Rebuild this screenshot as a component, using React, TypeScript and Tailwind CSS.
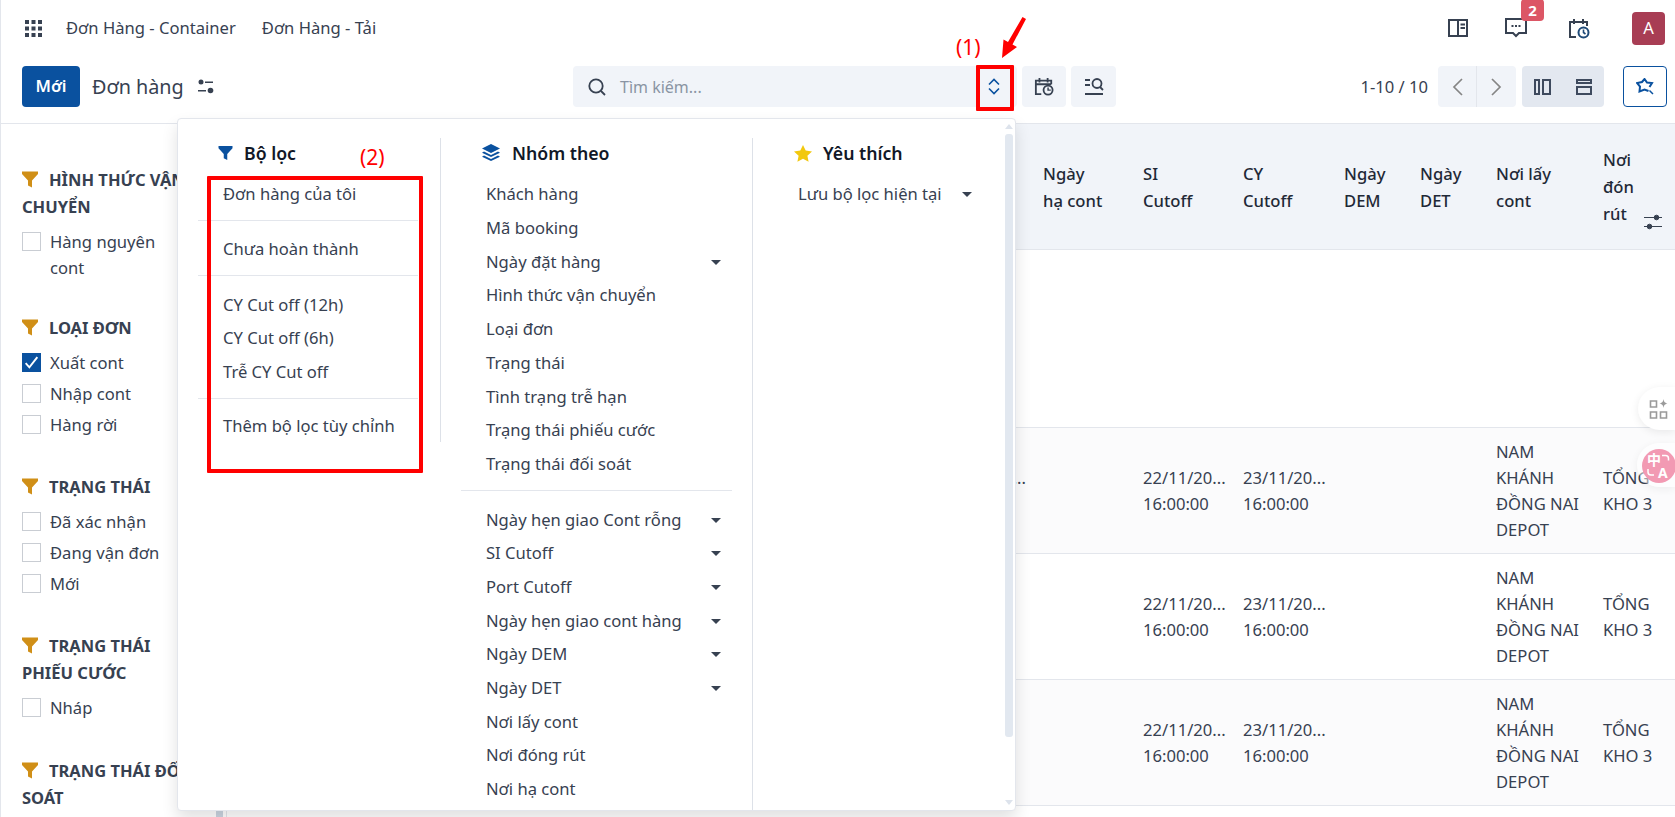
const font = "font-['Noto_Sans',sans-serif]";

function Funnel({ className }: { className: string }) {
  return (
    <svg viewBox="0 0 16 16" className={className} fill="currentColor">
      <path d="M0 0h16v2.5L10 9v7l-4-2V9L0 2.5z" />
    </svg>
  );
}

function Check({ checked, label }: { checked?: boolean; label: string }) {
  return (
    <div className="flex items-start gap-[9px] text-[#374151]">
      <span
        className={`mt-[3px] flex h-[19px] w-[19px] shrink-0 items-center justify-center border ${
          checked ? "border-[#0a519f] bg-[#0a519f]" : "border-[#c9cdd3] bg-white"
        }`}
      >
        {checked && (
          <svg viewBox="0 0 16 16" className="h-[17px] w-[17px]" fill="none" stroke="white" strokeWidth="1.8">
            <path d="M2.5 8.5l3.5 4L13.5 3" />
          </svg>
        )}
      </span>
      <span className="w-[125px] leading-[25.5px]">{label}</span>
    </div>
  );
}

function FilterGroup({ title, items }: { title: string; items: { label: string; checked?: boolean }[] }) {
  return (
    <div className="mb-[35.7px] first:mb-[34px]">
      <div className="mb-[9px] text-[16.5px] leading-[27px] font-bold text-[#374151]">
        <Funnel className="mr-[11px] inline-block h-[17px] w-[16px] align-[-2px] text-[#d08f17]" />
        {title}
      </div>
      <div className="flex flex-col gap-[5.5px]">
        {items.map((i) => (
          <Check key={i.label} label={i.label} checked={i.checked} />
        ))}
      </div>
    </div>
  );
}

const sidebar = [
  { title: "HÌNH THỨC VẬN CHUYỂN", items: [{ label: "Hàng nguyên cont" }] },
  { title: "LOẠI ĐƠN", items: [{ label: "Xuất cont", checked: true }, { label: "Nhập cont" }, { label: "Hàng rời" }] },
  { title: "TRẠNG THÁI", items: [{ label: "Đã xác nhận" }, { label: "Đang vận đơn" }, { label: "Mới" }] },
  { title: "TRẠNG THÁI PHIẾU CƯỚC", items: [{ label: "Nháp" }] },
  { title: "TRẠNG THÁI ĐỐI SOÁT", items: [] },
];

const columns = "grid-cols-[816px_100px_100px_101px_76px_76px_107px_1fr]";

function Row({ alt, dots }: { alt?: boolean; dots?: boolean }) {
  return (
    <div className={`grid h-[126px] items-center border-b border-[#e3e6ec] leading-[26px] text-[#374151] ${columns} ${alt ? "bg-[#fbfbfc]" : "bg-white"}`}>
      <div className="pr-[17px] text-right">
        {dots && "..."}
        <br />
        &nbsp;
      </div>
      <div />
      <div className="whitespace-nowrap">
        22/11/20...
        <br />
        16:00:00
      </div>
      <div className="whitespace-nowrap">
        23/11/20...
        <br />
        16:00:00
      </div>
      <div />
      <div />
      <div className="whitespace-nowrap">
        NAM
        <br />
        KHÁNH
        <br />
        ĐỒNG NAI
        <br />
        DEPOT
      </div>
      <div className="whitespace-nowrap">
        TỔNG
        <br />
        KHO 3
      </div>
    </div>
  );
}

function Caret() {
  return <span className="h-0 w-0 border-x-[5px] border-t-[5px] border-x-transparent border-t-[#374151]" />;
}

function MenuItem({ label, caret }: { label: string; caret?: boolean }) {
  return (
    <div className="flex h-[33.7px] items-center justify-between whitespace-nowrap text-[#374151]">
      <span>{label}</span>
      {caret && <Caret />}
    </div>
  );
}

const groupA = [
  { label: "Khách hàng" },
  { label: "Mã booking" },
  { label: "Ngày đặt hàng", caret: true },
  { label: "Hình thức vận chuyển" },
  { label: "Loại đơn" },
  { label: "Trạng thái" },
  { label: "Tình trạng trễ hạn" },
  { label: "Trạng thái phiếu cước" },
  { label: "Trạng thái đối soát" },
];
const groupB = [
  { label: "Ngày hẹn giao Cont rỗng", caret: true },
  { label: "SI Cutoff", caret: true },
  { label: "Port Cutoff", caret: true },
  { label: "Ngày hẹn giao cont hàng", caret: true },
  { label: "Ngày DEM", caret: true },
  { label: "Ngày DET", caret: true },
  { label: "Nơi lấy cont" },
  { label: "Nơi đóng rút" },
  { label: "Nơi hạ cont" },
];

export default function App() {
  return (
    <div className={`relative h-[817px] w-[1675px] overflow-hidden border-l border-[#e3e6ec] bg-white text-[16.6px] ${font}`}>
      <nav className="flex h-[56px] items-center pr-[10px] pl-[24px] text-[#374151]">
        <svg viewBox="0 0 17 17" className="mr-[24px] h-[17px] w-[17px]" fill="#374151">
          {[0, 6.5, 13].flatMap((x) => [0, 6.5, 13].map((y) => <rect key={`${x}-${y}`} x={x} y={y} width="4" height="4" />))}
        </svg>
        <span>Đơn Hàng - Container</span>
        <span className="ml-[26px]">Đơn Hàng - Tải</span>
        <div className="ml-auto flex items-center">
          <svg viewBox="0 0 20 18" className="mr-[37px] h-[18px] w-[20px]" fill="none" stroke="#374151" strokeWidth="2">
            <path d="M1 1h18v16H1zM10 1v16M12.5 5.5H17M12.5 9H17" />
          </svg>
          <div className="relative mr-[41px]">
            <svg viewBox="0 0 22 20" className="h-[20px] w-[22px]" fill="none" stroke="#374151" strokeWidth="2">
              <path d="M1 1h20v14h-7l-3 3-3-3H1z" />
              <path d="M6.5 8h2M10 8h2M13.5 8h2" />
            </svg>
            <span className="absolute -top-[19px] left-[16px] flex h-[22px] w-[23px] items-center justify-center rounded-[4px] bg-[#dc5665] text-[15px] font-bold text-white">2</span>
          </div>
          <svg viewBox="0 0 22 21" className="mr-[42px] h-[21px] w-[22px]" fill="none" stroke="#374151" strokeWidth="2">
            <path d="M19 8V4H2v15h6M6 1v5M15 1v5" />
            <circle cx="15.5" cy="14.5" r="5" stroke="#1f4a78" />
            <path d="M15.5 11.5v3l2 1.5" stroke="#1f4a78" strokeWidth="1.6" />
          </svg>
          <span className="flex h-[33px] w-[33px] items-center justify-center rounded-[4px] bg-[#a83d54] text-white">A</span>
        </div>
      </nav>

      <div className="flex h-[68px] items-start border-b border-[#e3e6ec] pt-[10px] pr-[8px] pl-[21px]">
        <div className="flex w-[551px] shrink-0 items-center">
          <button className="h-[41px] w-[58px] rounded-[4px] bg-[#0a519f] font-semibold text-white">Mới</button>
          <span className="ml-[12px] text-[19.8px] leading-[41px] whitespace-nowrap text-[#374151]">Đơn hàng</span>
          <svg viewBox="0 0 16 15" className="ml-[14px] h-[15px] w-[16px]" fill="#374151">
            <circle cx="3" cy="3" r="2.5" />
            <circle cx="12.5" cy="11.5" r="2.8" />
            <path d="M7 2.5h8V4H7zM0 11h8v1.5H0z" />
          </svg>
        </div>
        <div className="flex h-[41px] w-[444px] shrink-0 items-center rounded-[4px] bg-[#f1f4f9] pl-[15px] text-[16px] text-[#8a94a3]">
          <svg viewBox="0 0 18 18" className="h-[18px] w-[18px]" fill="none" stroke="#374151" strokeWidth="1.8">
            <circle cx="8" cy="8" r="6.7" />
            <path d="M13 13l4 4" />
          </svg>
          <span className="ml-[14px]">Tìm kiếm...</span>
          <svg viewBox="0 0 12 17" className="mr-[17px] ml-auto h-[17px] w-[12px]" fill="none" stroke="#0a519f" strokeWidth="1.6">
            <path d="M1 6.5L6 1.5l5 5M1 10.5l5 5 5-5" />
          </svg>
        </div>
        <button className="ml-[5px] flex h-[41px] w-[44px] items-center justify-center rounded-[4px] bg-[#f1f4f9]">
          <svg viewBox="0 0 22 21" className="h-[19px] w-[20px]" fill="none" stroke="#374151" strokeWidth="2">
            <path d="M19 8V4H2v15h6M2 8h17M6 1v5M15 1v5" />
            <circle cx="15.5" cy="14.5" r="5" />
            <path d="M15.5 11.5v3h3" strokeWidth="1.6" />
          </svg>
        </button>
        <button className="ml-[5px] flex h-[41px] w-[45px] items-center justify-center rounded-[4px] bg-[#f1f4f9]">
          <svg viewBox="0 0 20 17" className="h-[17px] w-[20px]" fill="none" stroke="#374151" strokeWidth="1.8">
            <path d="M1 2h5M1 7h5" />
            <path d="M1 16h18" strokeWidth="2" />
            <circle cx="13" cy="5.5" r="4.5" />
            <path d="M16 9l3 3" />
          </svg>
        </button>
        <div className="ml-auto flex items-center">
          <span className="leading-[41px] whitespace-nowrap text-[#374151]">1-10 / 10</span>
          <div className="ml-[10px] flex h-[41px] w-[78px] rounded-[4px] bg-[#f1f4f9]">
            <div className="flex w-[39px] items-center justify-center border-r border-[#e3e6ec]">
              <svg viewBox="0 0 11 18" className="h-[18px] w-[11px]" fill="none" stroke="#858585" strokeWidth="1.7">
                <path d="M10 1L2 9l8 8" />
              </svg>
            </div>
            <div className="flex flex-1 items-center justify-center">
              <svg viewBox="0 0 11 18" className="h-[18px] w-[11px]" fill="none" stroke="#858585" strokeWidth="1.7">
                <path d="M1 1l8 8-8 8" />
              </svg>
            </div>
          </div>
          <div className="ml-[6px] flex h-[41px] w-[82px] items-center justify-center gap-[25px] rounded-[4px] bg-[#e3e8f0]">
            <svg viewBox="0 0 17 16" className="h-[16px] w-[17px]" fill="none" stroke="#3e4a5e" strokeWidth="2">
              <path d="M1 1h4v14H1zM9 1h7v14H9z" />
            </svg>
            <svg viewBox="0 0 16 16" className="h-[16px] w-[16px]" fill="none" stroke="#3e4a5e" strokeWidth="2">
              <path d="M1 1h14v3H1zM1 8h14v7H1z" />
            </svg>
          </div>
          <button className="ml-[19px] flex h-[41px] w-[44px] items-center justify-center rounded-[4px] border border-[#0a519f]">
            <svg viewBox="0 0 18 17" className="h-[17px] w-[18px]" fill="none" stroke="#0a519f" strokeWidth="2">
              <path d="M12.5 13L8.5 11.5 3.500 13.5 4 8.500 1 5l5-1L8.500 1l2.500 3.500 5 .5-2.500 4" />
              <path d="M13.500 12.500l3.500 3.500" strokeWidth="1.5" />
            </svg>
          </button>
        </div>
      </div>

      <div className="flex h-[693px]">
        <aside className="relative w-[226px] shrink-0 overflow-hidden border-r border-[#e3e6ec] pt-[42px] pl-[21px]">
          <div className="w-[172px]">
            {sidebar.map((g) => (
              <FilterGroup key={g.title} title={g.title} items={g.items} />
            ))}
          </div>
          <div className="absolute right-[3px] bottom-0 h-[6px] w-[7px] bg-[#cbd5e1]" />
        </aside>
        <main className="min-w-0 flex-1">
          <div className={`grid h-[126px] items-center border-b border-[#e3e6ec] bg-[#f1f4f9] leading-[27px] font-medium text-[#1f2937] ${columns}`}>
            <div />
            <div>Ngày<br />hạ cont</div>
            <div>SI<br />Cutoff</div>
            <div>CY<br />Cutoff</div>
            <div>Ngày<br />DEM</div>
            <div>Ngày<br />DET</div>
            <div>Nơi lấy<br />cont</div>
            <div className="relative">
              Nơi<br />đón<br />rút
              <svg viewBox="0 0 18 16" className="absolute top-[68px] left-[41px] h-4 w-[18px]" fill="#374151" stroke="#374151">
                <path d="M0 3.5h18M0 12.5h18" />
                <circle cx="12.5" cy="3.5" r="2.3" />
                <circle cx="5.5" cy="12.5" r="2.3" />
              </svg>
            </div>
          </div>
          <div className="h-[178px] border-b border-[#e3e6ec]" />
          <Row alt dots />
          <Row />
          <Row alt />
        </main>
      </div>

      {/* dropdown filter panel */}
      <div className="absolute top-[118px] left-[176px] flex h-[693px] w-[839px] rounded-[4px] border border-[#e3e6ec] bg-white pt-[19px] shadow-[0_8px_16px_rgba(0,0,0,0.12)]">
        <div className="h-[304px] w-[263px] shrink-0 self-start border-r border-[#dde1e8] pl-[20px]">
          <div className="mb-[10px] flex h-[30px] items-center pl-[20px] text-[17.7px] font-semibold text-[#111827]">
            <Funnel className="mr-[11px] h-[14px] w-[15px] text-[#0a519f]" />
            Bộ lọc
          </div>
          <div className="w-[220px]">
            <div className="pl-[25px]">
              <MenuItem label="Đơn hàng của tôi" />
            </div>
            <div className="mt-[8px] mb-[12px] border-t border-[#e3e6ec]" />
            <div className="pl-[25px]">
              <MenuItem label="Chưa hoàn thành" />
            </div>
            <div className="mt-[9px] mb-[12px] border-t border-[#e3e6ec]" />
            <div className="pl-[25px]">
              <MenuItem label="CY Cut off (12h)" />
              <MenuItem label="CY Cut off (6h)" />
              <MenuItem label="Trễ CY Cut off" />
            </div>
            <div className="mt-[9px] mb-[10px] border-t border-[#e3e6ec]" />
            <div className="pl-[25px]">
              <MenuItem label="Thêm bộ lọc tùy chỉnh" />
            </div>
          </div>
        </div>

        <div className="w-[312px] shrink-0 border-r border-[#dde1e8] pl-[20px]">
          <div className="mb-[10px] flex h-[30px] items-center pl-[21px] text-[17.7px] font-semibold text-[#111827]">
            <svg viewBox="0 0 18 18" className="mr-[12px] h-[18px] w-[18px]" fill="#0a519f">
              <path d="M9 0l9 4.5L9 9 0 4.5z" />
              <path d="M2 7.5l7 3.5 7-3.5 2 1.2L9 13 0 8.7z" />
              <path d="M2 11.5l7 3.5 7-3.5 2 1.2L9 17 0 12.7z" />
            </svg>
            Nhóm theo
          </div>
          <div className="w-[271px]">
            <div className="pr-[11px] pl-[25px]">
              {groupA.map((i) => (
                <MenuItem key={i.label} label={i.label} caret={i.caret} />
              ))}
            </div>
            <div className="mt-[9px] mb-[12px] border-t border-[#e3e6ec]" />
            <div className="pr-[11px] pl-[25px]">
              {groupB.map((i) => (
                <MenuItem key={i.label} label={i.label} caret={i.caret} />
              ))}
            </div>
          </div>
        </div>

        <div className="flex-1">
          <div className="mb-[10px] flex h-[30px] items-center pl-[41px] text-[17.7px] font-semibold text-[#111827]">
            <svg viewBox="0 0 18 17" className="mr-[11px] h-[17px] w-[18px]" fill="#f2c80f">
              <path d="M9 0l2.7 5.6 6.3.8-4.6 4.3 1.2 6.1L9 13.8l-5.6 3 1.2-6.1L0 6.4l6.3-.8z" />
            </svg>
            Yêu thích
          </div>
          <div className="pr-[43px] pl-[45px]">
            <MenuItem label="Lưu bộ lọc hiện tại" caret />
          </div>
        </div>

        {/* scrollbar */}
        <div className="absolute top-[5px] right-[2px] flex h-[681px] w-[8px] flex-col items-center">
          <span className="h-0 w-0 border-x-[4px] border-b-[5px] border-x-transparent border-b-[#dde3ec]" />
          <div className="mt-[5px] h-[603px] w-[8px] rounded-[3px] bg-[#e2e8f0]" />
          <span className="mt-auto h-0 w-0 border-x-[4px] border-t-[5px] border-x-transparent border-t-[#dde3ec]" />
        </div>
      </div>

      {/* floating browser widgets */}
      <div className="absolute top-[387px] right-0 flex h-[43px] w-[37px] items-center rounded-l-full bg-white pl-[11px] shadow-[0_2px_8px_rgba(0,0,0,0.08)]">
        <svg viewBox="0 0 18 20" className="h-[20px] w-[19px]" fill="none" stroke="#9a9a9a" strokeWidth="1.6">
          <path d="M1 2h6v6H1zM1 13h6v6H1zM11 13h6v6h-6z" />
          <path d="M14 0c.5 3 1 3.6 4 4.5c-3 .9-3.500 1.500-4 4.500c-.5-3-1-3.600-4-4.500c3-.9 3.500-1.500 4-4.500z" fill="#9a9a9a" stroke="none" />
        </svg>
      </div>
      <div className="absolute top-[443px] right-0 flex h-[44px] w-[38px] items-center rounded-l-full bg-white/50 pl-[5px] shadow-[0_2px_8px_rgba(0,0,0,0.06)]">
        <div className="relative mt-[1px] flex h-[34px] w-[34px] shrink-0 flex-col justify-center rounded-full bg-[#f29ab3] pl-[5px] text-[14px] leading-[13px] font-bold text-white">
          <span className="font-['Noto_Sans_CJK_SC',sans-serif]">中</span>
          <span className="ml-[11px]">A</span>
          <svg viewBox="0 0 34 34" className="absolute inset-0 h-[34px] w-[34px]" fill="none" stroke="white" strokeWidth="1.5">
            <path d="M20 6.5h3.500c2 0 3 1 3 3v2M6 20v3c0 2 1 3 3 3h3" />
          </svg>
        </div>
      </div>

      {/* red annotations */}
      <span className="absolute top-[33px] left-[955px] text-[21px] leading-[28px] text-[#ff0000]">(1)</span>
      <span className="absolute top-[143px] left-[359px] text-[21px] leading-[28px] text-[#ff0000]">(2)</span>
      <div className="absolute top-[65px] left-[975px] h-[46px] w-[38px] rounded-[1px] border-4 border-[#ff0000]" />
      <div className="absolute top-[176px] left-[206px] h-[297px] w-[216px] rounded-[1px] border-4 border-[#ff0000]" />
      <svg viewBox="0 0 26 42" className="absolute top-[17px] left-[999px] h-[42px] w-[26px]" fill="#ff0000">
        <path d="M22.5 0L26 2 12.5 27.5 17 30 2 41 3.500 22.500 8 25z" />
      </svg>
    </div>
  );
}
